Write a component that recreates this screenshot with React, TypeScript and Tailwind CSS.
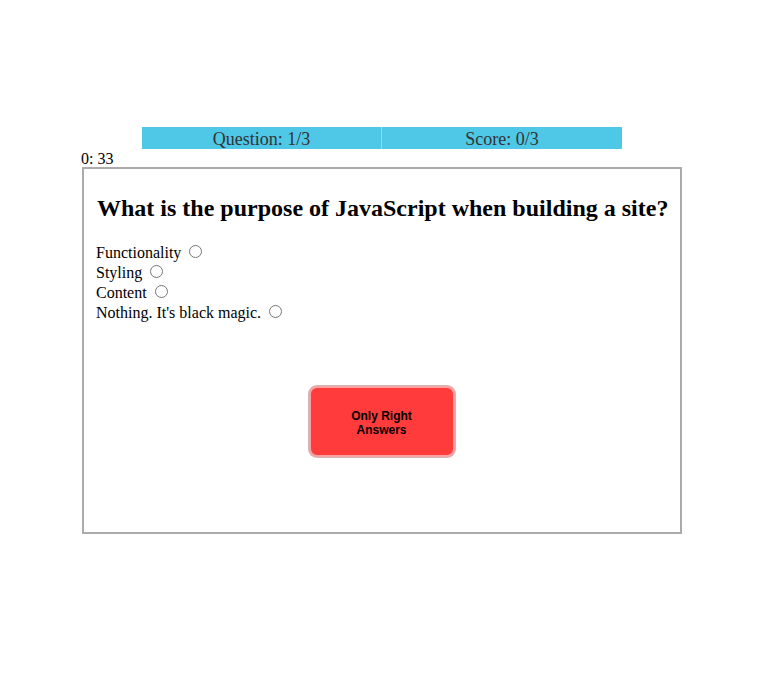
import React from "react";

export default function App() {
  const options = ["Functionality", "Styling", "Content", "Nothing. It's black magic."];
  return (
    <div className="w-[761px] h-[675px] bg-white pt-[127px]" style={{ fontFamily: '"Liberation Serif", "Times New Roman", serif' }}>
      <div className="ml-[142px] w-[480px] h-[22px] flex bg-[#4fc7e6] text-[#333333] text-[18px] leading-[24px]">
        <div className="w-[240px] text-center border-r border-[#8fdcef]">Question: 1/3</div>
        <div className="w-[240px] text-center">Score: 0/3</div>
      </div>
      <div className="ml-[81px] text-[16px] leading-[18px] pt-px h-[18px] text-black">0: 33</div>
      <div className="ml-[82px] w-[600px] h-[367px] border-2 border-[#ababab] flex flex-col px-[13px]">
        <h2 className="mt-[25px] text-[24px] leading-[28px] font-bold text-black whitespace-nowrap">
          What is the purpose of JavaScript when building a site?
        </h2>
        <div className="mt-[21px] flex flex-col text-[16px] leading-[20px] text-black">
          {options.map((o) => (
            <label key={o} className="flex items-center h-[20px]">
              <span className="-ml-px">{o}</span>
              <span className="ml-[8px] mt-[-3px] w-[13px] h-[13px] rounded-full border border-[#767676] bg-white inline-block" />
            </label>
          ))}
        </div>
        <div className="flex justify-center mt-[63px] ml-[-1px]">
          <button className="w-[146px] h-[71px] pt-[3px] rounded-[8px] bg-[#ff3b3b] border-2 border-[#f7a3a3] shadow-[0_0_0_1px_#d4b4b4] text-black text-[12px] leading-[14px] font-bold" style={{ fontFamily: '"Liberation Sans", Arial, sans-serif' }}>
            Only Right
            <br />
            Answers
          </button>
        </div>
      </div>
    </div>
  );
}
